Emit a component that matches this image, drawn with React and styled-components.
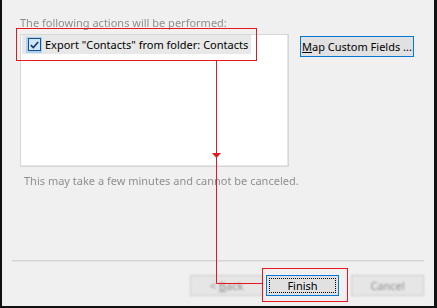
import React from 'react';
import styled, { createGlobalStyle } from 'styled-components';

const Global = createGlobalStyle`
    html, body {
        margin: 0;
        padding: 0;
        background: #f0f0f0;
    }
    body {
        font-family: 'Noto Sans', 'Open Sans', sans-serif;
    }
`;

const Frame = styled.div`
    position: relative;
    width: 437px;
    height: 308px;
    box-sizing: border-box;
    background: #f0f0f0;
    border-left: 2px solid #111;
    border-right: 3px solid #111;
    border-bottom: 2px solid #111;
    display: flex;
    flex-direction: column;
    font-size: 11px;
    line-height: 15px;
    color: #000;
`;

const Body = styled.div`
    padding: 15px 0 0 18px;
    display: flex;
    flex-direction: column;
`;

const Label = styled.div`
    color: #8f8f8f;
    filter: blur(0.7px);
    white-space: nowrap;
`;

const Columns = styled.div`
    display: flex;
    gap: 11px;
    margin-top: 4px;
`;

const ListBox = styled.div`
    width: 269px;
    height: 133px;
    box-sizing: border-box;
    background: #fff;
    border: 1px solid #d7d7d7;
    box-shadow: inset -1px -1px 0 #e6e6e6;
    padding: 0 1px;
`;

const Item = styled.div`
    display: flex;
    align-items: center;
    gap: 3px;
    width: 229px;
    height: 19px;
    padding-left: 4px;
    box-sizing: border-box;
    background: ${p => (p.selected ? '#e8e8e8' : 'transparent')};
    white-space: nowrap;
`;

const Check = styled.span`
    width: 16px;
    height: 16px;
    box-sizing: border-box;
    background: #a9d1f3;
    padding: 1px;
    display: flex;
    align-items: center;
    justify-content: center;
    & > span {
        width: 13px;
        height: 13px;
        box-sizing: border-box;
        border: 1px solid #1f4e8a;
        background: #cfe5f8;
        display: flex;
        align-items: center;
        justify-content: center;
    }
`;

const Side = styled.div`
    padding-top: 2px;
`;

const Button = styled.div`
    width: ${p => p.w || 73}px;
    height: 21px;
    box-sizing: border-box;
    background: #e1e1e1;
    border: 1px solid ${p => (p.focused ? '#0078d7' : '#adadad')};
    display: flex;
    align-items: center;
    justify-content: center;
    position: relative;
    white-space: nowrap;
    color: ${p => (p.disabled ? '#8d8d8d' : '#000')};
    filter: ${p => (p.disabled ? 'blur(0.8px)' : 'none')};
    ${p => p.disabled && 'border-color: #cbcbcb; background: #e6e6e6;'}
`;

const FocusRing = styled.span`
    position: absolute;
    inset: 2px;
    border: 1px dotted #000;
`;

const Note = styled.div`
    margin-top: 6px;
    padding-left: 4px;
    color: #8f8f8f;
    filter: blur(0.7px);
    white-space: nowrap;
`;

const Footer = styled.div`
    margin-top: auto;
    padding: 0 10px 10px 10px;
`;

const Separator = styled.div`
    height: 0;
    border-top: 1px solid #d5d5d5;
    border-bottom: 1px solid #e3e3e3;
    filter: blur(0.4px);
`;

const ButtonRow = styled.div`
    display: flex;
    justify-content: flex-end;
    margin-top: 13px;
    gap: 3px;
    & > :last-child {
        margin-left: 9px;
    }
`;

const Overlay = styled.svg`
    position: absolute;
    left: -2px;
    top: 0;
    pointer-events: none;
`;

function Checkmark() {
    return (
        <svg width="9" height="8" viewBox="0 0 9 8">
            <path d="M0.8 4.2 L3.3 6.6 L8.2 1" fill="none" stroke="#17386b" strokeWidth="1.6" />
        </svg>
    );
}

export default function App() {
    return (
        <>
            <Global />
            <Frame>
                <Body>
                    <Label>The following actions will be performed:</Label>
                    <Columns>
                        <ListBox>
                            <Item selected>
                                <Check>
                                    <span>
                                        <Checkmark />
                                    </span>
                                </Check>
                                Export "Contacts" from folder: Contacts
                            </Item>
                        </ListBox>
                        <Side>
                            <Button w={114} focused>
                                <span>
                                    <u>M</u>ap Custom Fields ...
                                </span>
                            </Button>
                        </Side>
                    </Columns>
                    <Note>This may take a few minutes and cannot be canceled.</Note>
                </Body>
                <Footer>
                    <Separator />
                    <ButtonRow>
                        <Button disabled>
                            <span>
                                &lt; <u>B</u>ack
                            </span>
                        </Button>
                        <Button focused>
                            <FocusRing />
                            Finish
                        </Button>
                        <Button disabled>Cancel</Button>
                    </ButtonRow>
                </Footer>
                <Overlay width="437" height="308" viewBox="0 0 437 308">
                    <g stroke="#e8161f" strokeWidth="1" fill="none">
                        <rect x="16.5" y="28.5" width="240" height="32" />
                        <path d="M216.5 61 V283.5 H262" />
                        <rect x="262.5" y="268.5" width="85" height="33" />
                    </g>
                    <path d="M212 153 H221 L216.5 158 Z" fill="#e8161f" />
                </Overlay>
            </Frame>
        </>
    );
}
